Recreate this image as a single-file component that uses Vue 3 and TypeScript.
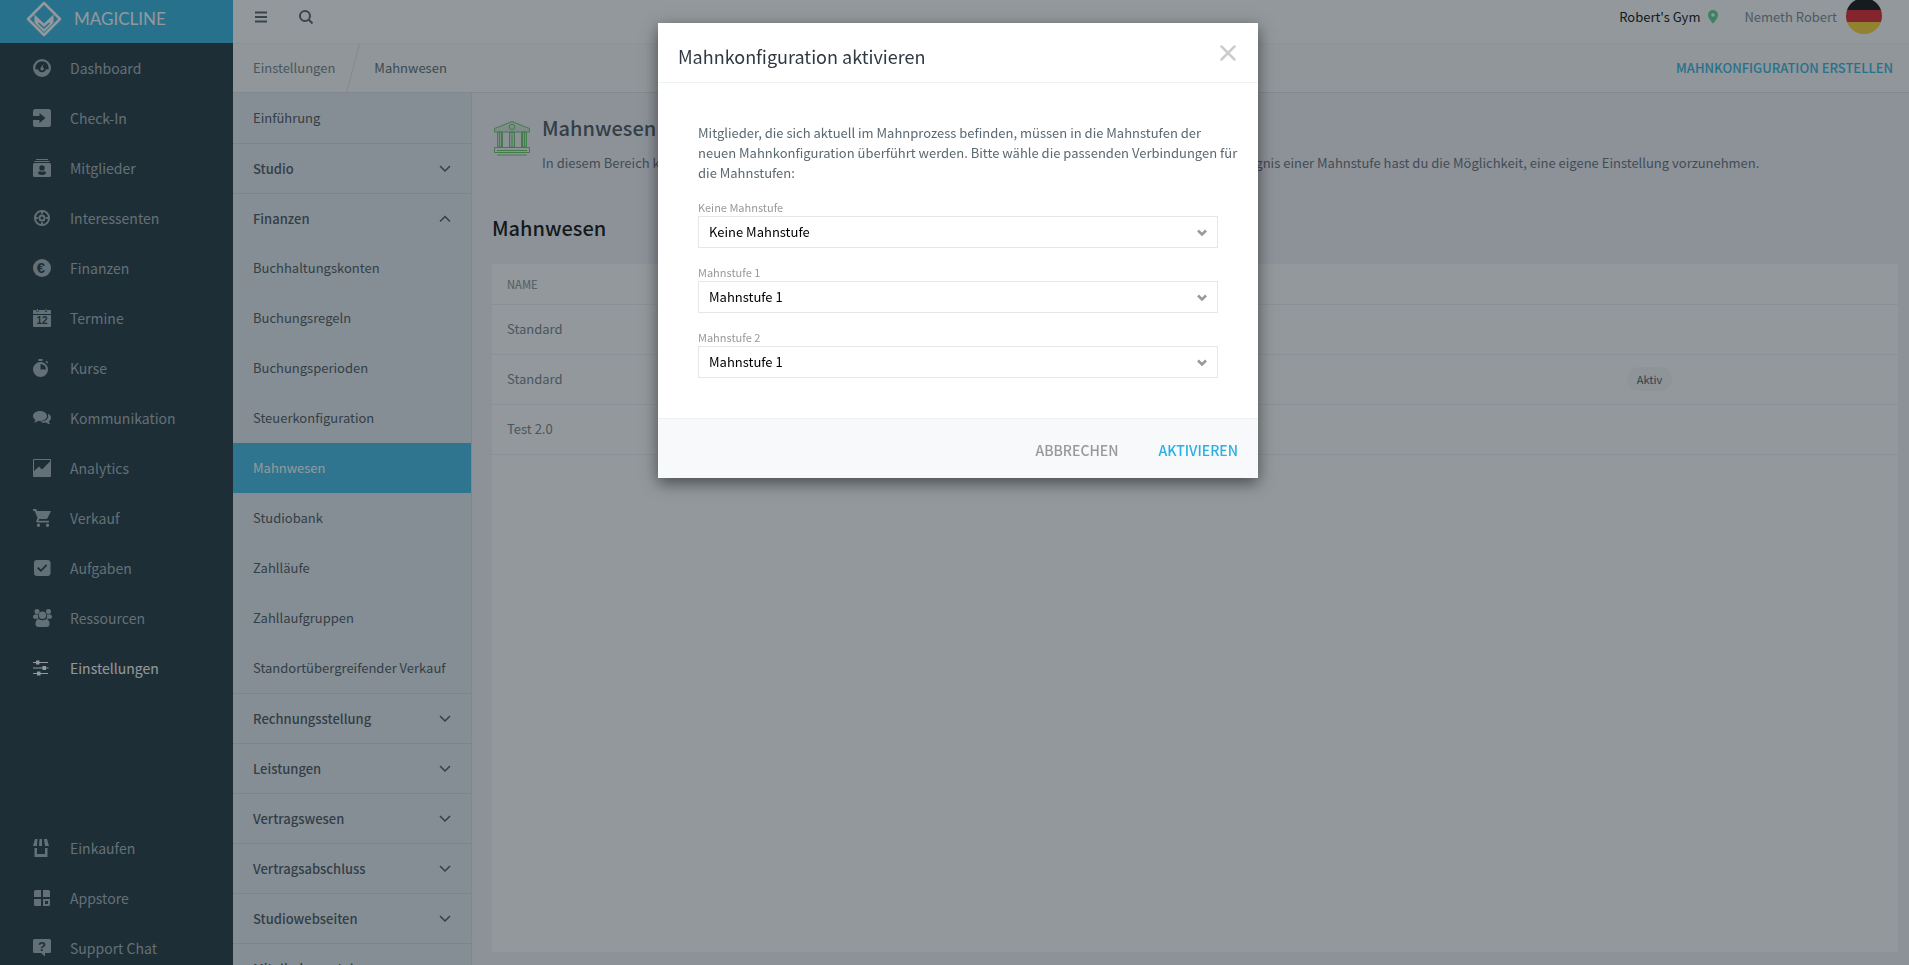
<script setup lang="ts">
import { ref } from 'vue'

interface Glyph {
  text: string
  x: number
  y: number
  size: number
}
interface NavItem {
  label: string
  path: string
  glyph?: Glyph
  active?: boolean
}
interface Group {
  label: string
  open?: boolean
  items?: string[]
}
interface Step {
  id: string
  label: string
  value: string
}

const mainNav: NavItem[] = [
  {
    label: 'Dashboard',
    path: 'M9 0a9 9 0 1 0 0 18A9 9 0 0 0 9 0zM9 2.2A6.8 6.8 0 0 1 15.8 9a6 6 0 0 1-.5 1.600L13 10.200A4.100 4.100 0 0 1 9 13.200A4.100 4.100 0 0 1 5 10.200L2.700 10.600A6 6 0 0 1 2.200 9A6.800 6.800 0 0 1 9 2.200zM10.600 4.600L9.600 8.200A1.700 1.700 0 1 1 7.600 9z',
  },
  {
    label: 'Check-In',
    path: 'M2.500 0h13A2.500 2.500 0 0 1 18 2.500v13a2.500 2.500 0 0 1-2.500 2.500h-13A2.500 2.500 0 0 1 0 15.500V11h6.500v3L12.500 9L6.500 4v3H0V2.500A2.500 2.500 0 0 1 2.500 0z',
  },
  {
    label: 'Mitglieder',
    path: 'M3 0h12v1H3zM1.500 2h15v1h-15zM1.500 4h15A1.500 1.500 0 0 1 18 5.500v11a1.500 1.500 0 0 1-1.500 1.500h-15A1.500 1.500 0 0 1 0 16.500v-11A1.500 1.500 0 0 1 1.500 4zM9 6.200a2.700 2.700 0 1 0 0 5.400a2.700 2.700 0 0 0 0-5.400zM5 14.500Q5 12 7.200 12.200Q9 13.200 10.800 12.200Q13 12 13 14.500Q11.500 16 9 16Q6.500 16 5 14.500z',
  },
  {
    label: 'Interessenten',
    path: 'M9 1a8 8 0 1 0 0 16A8 8 0 0 0 9 1zM8 3v1.800h2V3A6.200 6.200 0 0 1 15 8h-1.800v2H15a6.200 6.200 0 0 1-5 5v-1.800H8V15a6.200 6.200 0 0 1-5-5h1.800V8H3a6.200 6.200 0 0 1 5-5zM9 5.500a3.500 3.500 0 1 0 0 7a3.500 3.500 0 0 0 0-7zM9 7.400a1.600 1.600 0 1 1 0 3.200a1.600 1.600 0 0 1 0-3.200z',
  },
  {
    label: 'Finanzen',
    path: 'M9 0a9 9 0 1 0 0 18A9 9 0 0 0 9 0z',
    glyph: { text: '€', x: 8, y: 14, size: 15 },
  },
  {
    label: 'Termine',
    path: 'M1 1h2.500v2h2V1h6.500v2h2V1H17a1 1 0 0 1 1 1v3H0V2a1 1 0 0 1 1-1zM4 0h1v2.500H4zM12.500 0h1v2.500h-1zM0 6h18v11a1 1 0 0 1-1 1H1a1 1 0 0 1-1-1z',
    glyph: { text: '12', x: 9, y: 15, size: 10 },
  },
  {
    label: 'Kurse',
    path: 'M5.500 0h4v2h-4zM12.500 2.500l1.200-.8l1.500 2l-1.200.8zM7.500 3a7.500 7.500 0 1 0 0 15a7.500 7.500 0 0 0 0-15zM7.500 5A5.500 5.500 0 0 1 13 10.500H7.500z',
  },
  {
    label: 'Kommunikation',
    path: 'M7 2C3 2 0 4.200 0 7c0 1.700 1 3 2.500 4c-.2 1-.8 1.700-1.500 2.500c1.800 0 3.200-.8 4.200-1.700c.6.200 1.200.2 1.800.2c4 0 7-2.200 7-5S11 2 7 2zM15 4.800c1.900.8 3 2.200 3 3.900c0 1.500-.9 2.800-2.200 3.600c.1 1 .7 2 1.700 2.900c-1.800 0-3.200-.6-4.300-1.600c-2.300.4-4.600 0-6.200-1.200C12 12.700 15 10.300 15.200 7.200Q15.200 6 15 4.800z',
  },
  {
    label: 'Analytics',
    path: 'M1 0h16a1 1 0 0 1 1 1v16a1 1 0 0 1-1 1H1a1 1 0 0 1-1-1V1a1 1 0 0 1 1-1zM1 1v11l5-4.500l3 3L17 2.500V1z',
  },
  {
    label: 'Verkauf',
    path: 'M0 0h3.200l.9 2H18l-3.500 7.200q-.5.800-1.500.800H6.300l-.9 1.700h10.600v1.700H4.500q-2-.1-1.200-2L4.600 9L1.700 2H0zM5.500 14.500a1.700 1.700 0 1 0 0 3.400a1.700 1.700 0 0 0 0-3.400zM14.500 14.500a1.700 1.700 0 1 0 0 3.400a1.700 1.700 0 0 0 0-3.400z',
  },
  {
    label: 'Aufgaben',
    path: 'M4 1h10.500A3 3 0 0 1 17.500 4v10a3 3 0 0 1-3 3H4a3 3 0 0 1-3-3V4A3 3 0 0 1 4 1zM4 9.200l4 3.900l6.300-6.500L13 5.300L8 10.400L5.300 7.900z',
  },
  {
    label: 'Ressourcen',
    path: 'M9.500 2.500a3.700 3.700 0 1 0 0 7.400a3.700 3.700 0 0 0 0-7.400zM4 0a2.500 2.500 0 1 0 0 5a2.500 2.500 0 0 0 0-5zM15.500 0a2.500 2.500 0 1 0 0 5a2.500 2.500 0 0 0 0-5zM5.500 10q4 2.500 8 0q3 .8 3 5q0 3-3 3h-8q-3 0-3-3q0-4.200 3-5zM1.500 5.500h3.600q-.5 2.600.6 4.200H1.500Q0 9.500 0 8q0-2 1.500-2.500zM13.900 5.500h3.600Q19 6 19 8q0 1.500-1.500 1.700h-4.200q1.100-1.600.6-4.200z',
  },
  {
    label: 'Einstellungen',
    path: 'M0 3h3V1.500h3.500V3H15v1H6.500v1.500H3V4H0zM0 8.500h9.500V7H13v1.500h2.500v1H13V11H9.500V9.500H0zM0 14h4v-1.500h3.500V14H15v1H7.500v1.500H4V15H0z',
    active: true,
  },
]

const footerNav: NavItem[] = [
  {
    label: 'Einkaufen',
    path: 'M2 0h2.500L4 7H0zM6.500 0H9v7H6zM11 0h3l2 7h-4zM1.500 9h2.500v6h8V9h2.500v9h-13z',
  },
  {
    label: 'Appstore',
    path: 'M2.500 1H8v7H1V2.500A1.500 1.500 0 0 1 2.500 1zM10 1h5.500A1.500 1.500 0 0 1 17 2.500V8h-7zM1 10h7v7H2.500A1.500 1.500 0 0 1 1 15.500zM10 10h7v5.500a1.500 1.500 0 0 1-1.500 1.500H10zM12 12v3h3v-3z',
  },
  {
    label: 'Support Chat',
    path: 'M1.500 0h15A1.500 1.500 0 0 1 18 1.500v11a1.500 1.500 0 0 1-1.500 1.500H12v3.500L8 14H1.500A1.500 1.500 0 0 1 0 12.500v-11A1.500 1.500 0 0 1 1.500 0z',
    glyph: { text: '?', x: 9, y: 12, size: 13 },
  },
]

const groups: Group[] = [
  { label: 'Studio' },
  {
    label: 'Finanzen',
    open: true,
    items: [
      'Buchhaltungskonten',
      'Buchungsregeln',
      'Buchungsperioden',
      'Steuerkonfiguration',
      'Mahnwesen',
      'Studiobank',
      'Zahlläufe',
      'Zahllaufgruppen',
      'Standortübergreifender Verkauf',
    ],
  },
  { label: 'Rechnungsstellung' },
  { label: 'Leistungen' },
  { label: 'Vertragswesen' },
  { label: 'Vertragsabschluss' },
  { label: 'Studiowebseiten' },
  { label: 'Mitgliederportal' },
]

const current = ref('Mahnwesen')
const rows = [
  { name: 'Standard', active: false },
  { name: 'Standard', active: true },
  { name: 'Test 2.0', active: false },
]

const options = ['Keine Mahnstufe', 'Mahnstufe 1']
const steps = ref<Step[]>([
  { id: 'step-0', label: 'Keine Mahnstufe', value: 'Keine Mahnstufe' },
  { id: 'step-1', label: 'Mahnstufe 1', value: 'Mahnstufe 1' },
  { id: 'step-2', label: 'Mahnstufe 2', value: 'Mahnstufe 1' },
])
</script>

<template>
  <div class="app">
    <aside class="sidebar">
      <a class="brand" href="#">
        <svg class="brand-mark" viewBox="0 0 36 36" width="36" height="36">
          <path d="M18 2L34 18L18 34L2 18z" fill="none" stroke="currentColor" stroke-width="2.500" stroke-linejoin="round" />
          <path d="M8.500 13.500L18 22.500L27.500 13.500V21.500L18 31L8.500 21.500z" fill="currentColor" />
          <path d="M12.500 22L18 27L23.500 22" fill="none" stroke="#2ab0e2" stroke-width="1.500" />
        </svg>
        <span class="brand-name">MAGICLINE</span>
      </a>
      <nav class="nav">
        <a v-for="item in mainNav" :key="item.label" href="#" class="nav-item" :class="{ active: item.active }">
          <svg class="nav-icon" viewBox="0 0 19 18" width="19" height="18">
            <path :d="item.path" fill="currentColor" fill-rule="evenodd" />
            <text v-if="item.glyph" class="nav-glyph" :x="item.glyph.x" :y="item.glyph.y" :font-size="item.glyph.size" text-anchor="middle">{{ item.glyph.text }}</text>
          </svg>
          <span>{{ item.label }}</span>
        </a>
      </nav>
      <nav class="nav nav-bottom">
        <a v-for="item in footerNav" :key="item.label" href="#" class="nav-item">
          <svg class="nav-icon" viewBox="0 0 19 18" width="19" height="18">
            <path :d="item.path" fill="currentColor" fill-rule="evenodd" />
            <text v-if="item.glyph" class="nav-glyph" :x="item.glyph.x" :y="item.glyph.y" :font-size="item.glyph.size" text-anchor="middle">{{ item.glyph.text }}</text>
          </svg>
          <span>{{ item.label }}</span>
        </a>
      </nav>
    </aside>

    <div class="main">
      <header class="topbar">
        <button class="icon-btn" type="button" aria-label="Menü">
          <svg viewBox="0 0 14 14" width="14" height="14"><path d="M1 2.500h12M1 7h12M1 11.500h12" stroke="currentColor" stroke-width="2" /></svg>
        </button>
        <button class="icon-btn" type="button" aria-label="Suchen">
          <svg viewBox="0 0 14 14" width="14" height="14" fill="none" stroke="currentColor" stroke-width="2"><circle cx="6" cy="6" r="5" /><path d="M9.500 9.500L13.500 13.500" /></svg>
        </button>
        <a class="gym" href="#">
          <span>Robert's Gym</span>
          <svg viewBox="0 0 10 14" width="10" height="14"><path d="M5 0a5 5 0 0 0-5 5c0 3.500 5 8.500 5 8.500s5-5 5-8.500a5 5 0 0 0-5-5zM5 3.200a1.800 1.800 0 1 1 0 3.600a1.800 1.800 0 0 1 0-3.600z" fill="#53d38d" fill-rule="evenodd" /></svg>
        </a>
        <a class="user" href="#">Nemeth Robert</a>
        <svg class="flag" viewBox="0 2 36 34" width="36" height="34">
          <defs><clipPath id="flag-clip"><circle cx="18" cy="18" r="18" /></clipPath></defs>
          <g clip-path="url(#flag-clip)">
            <path d="M0 0h36v12H0z" fill="#050505" />
            <path d="M0 12h36v12H0z" fill="#e01820" />
            <path d="M0 24h36v12H0z" fill="#ffd028" />
          </g>
        </svg>
      </header>

      <div class="crumbs">
        <a href="#" class="crumb">Einstellungen</a>
        <svg class="slash" viewBox="0 0 14 49" width="14" height="49"><path d="M13.500 0L.5 49" stroke="#dfe2e5" fill="none" /></svg>
        <a href="#" class="crumb crumb-last">Mahnwesen</a>
        <button type="button" class="create">MAHNKONFIGURATION ERSTELLEN</button>
      </div>

      <div class="body">
        <nav class="submenu">
          <a href="#" class="sub-item">Einführung</a>
          <template v-for="group in groups" :key="group.label">
            <button type="button" class="sub-head">
              <span>{{ group.label }}</span>
              <svg viewBox="0 0 12 8" width="12" height="8" fill="none" stroke="currentColor" stroke-width="1.500">
                <path :d="group.open ? 'M1 6.500L6 1.500L11 6.500' : 'M1 1L6 6L11 1'" />
              </svg>
            </button>
            <a v-for="item in group.items ?? []" :key="item" href="#" class="sub-item" :class="{ current: item === current }" @click.prevent="current = item">{{ item }}</a>
          </template>
        </nav>

        <main class="content">
          <section class="intro">
            <svg class="bank" viewBox="0 0 38 36" width="38" height="36" fill="none" stroke="#62c462" stroke-width="1">
              <path fill="#62c462" fill-opacity=".2" d="M1.500 8.500L19 1.500L36.500 8.500V12H1.500zM4.500 12h4v15h-4zM16.500 12h5v15h-5zM29.500 12h4v15h-4z" />
              <circle cx="19" cy="7" r="2.700" />
              <path d="M9.500 12v15M28.500 12v15M6.500 12v15M19 12v15M31.500 12v15M1.500 27.500h35v5h-35zM4 30.500h30M4 35h30" />
            </svg>
            <div>
              <h1 class="title">Mahnwesen</h1>
              <p class="lead">In diesem Bereich kannst du alle deine Mahnkonfigurationen verwalten sowie neue Mahnstufen anlegen. Für jedes Ereignis einer Mahnstufe hast du die Möglichkeit, eine eigene Einstellung vorzunehmen.</p>
            </div>
          </section>
          <h2 class="heading">Mahnwesen</h2>
          <div class="panel">
            <table class="table">
              <thead>
                <tr><th scope="col">NAME</th><th scope="col"></th></tr>
              </thead>
              <tbody>
                <tr v-for="(row, i) in rows" :key="i">
                  <td>{{ row.name }}</td>
                  <td class="status"><span v-if="row.active" class="badge">Aktiv</span></td>
                </tr>
              </tbody>
            </table>
          </div>
        </main>
      </div>
    </div>

    <div class="overlay">
      <div class="dialog" role="dialog" aria-modal="true" aria-labelledby="dialog-title">
        <header class="dialog-head">
          <h3 id="dialog-title" class="dialog-title">Mahnkonfiguration aktivieren</h3>
          <button type="button" class="close" aria-label="Schließen">
            <svg viewBox="0 0 16 16" width="16" height="16"><path d="M1.500 1.500L14.500 14.500M14.500 1.500L1.500 14.500" stroke="currentColor" stroke-width="2.500" stroke-linecap="round" /></svg>
          </button>
        </header>
        <div class="dialog-body">
          <p class="dialog-text">Mitglieder, die sich aktuell im Mahnprozess befinden, müssen in die Mahnstufen der neuen Mahnkonfiguration überführt werden. Bitte wähle die passenden Verbindungen für die Mahnstufen:</p>
          <div v-for="step in steps" :key="step.id" class="field">
            <label class="field-label" :for="step.id">{{ step.label }}</label>
            <div class="select-wrap">
              <select :id="step.id" v-model="step.value" class="select">
                <option v-for="option in options" :key="option" :value="option">{{ option }}</option>
              </select>
              <svg class="caret" viewBox="0 0 10 8" width="10" height="8"><path d="M1 1.500L5 5.500L9 1.500" fill="none" stroke="#999" stroke-width="2.500" /></svg>
            </div>
          </div>
        </div>
        <footer class="dialog-foot">
          <button type="button" class="action">ABBRECHEN</button>
          <button type="button" class="action primary">AKTIVIEREN</button>
        </footer>
      </div>
    </div>
  </div>
</template>

<style>
body {
  overflow: hidden;
}
</style>

<style scoped>
.app,
.app * {
  box-sizing: border-box;
}
.app {
  display: flex;
  height: 100vh;
  overflow: hidden;
  font-family: 'Noto Sans CJK SC', 'Noto Sans', sans-serif;
  font-size: 13px;
  line-height: 20px;
  color: #424b54;
}
a {
  color: inherit;
  text-decoration: none;
}
button {
  padding: 0;
  border: 0;
  background: none;
  font: inherit;
  color: inherit;
  cursor: pointer;
}
h1,
h2,
h3,
p {
  margin: 0;
}
svg {
  display: block;
  flex: none;
}

.sidebar {
  display: flex;
  flex: none;
  flex-direction: column;
  width: 233px;
  background: #162a34;
}
.brand {
  display: flex;
  flex: none;
  align-items: center;
  gap: 12px;
  height: 43px;
  padding: 0 0 6px 26px;
  background: #2ab0e2;
  color: #fff;
}
.brand-name {
  font-family: Lato, sans-serif;
  font-size: 17px;
}
.nav-item {
  display: flex;
  align-items: center;
  gap: 18px;
  height: 50px;
  padding-left: 33px;
  font-size: 14px;
  color: #a2aeb6;
}
.nav-item.active {
  color: #fff;
}
.nav-bottom {
  height: 142px;
  margin-top: auto;
}
.nav-glyph {
  fill: #162a34;
  font-family: 'Liberation Sans', sans-serif;
  font-weight: 700;
}

.main {
  display: flex;
  flex: 1;
  flex-direction: column;
  min-width: 0;
}
.topbar {
  display: flex;
  flex: none;
  align-items: center;
  height: 43px;
  padding: 0 27px 9px 21px;
  background: #fff;
}
.icon-btn {
  margin-right: 31px;
  color: #4d5661;
}
.gym {
  display: flex;
  align-items: center;
  gap: 8px;
  margin-left: auto;
  color: #000;
}
.user {
  margin: 0 9px 0 26px;
  color: #76818b;
}
.flag {
  align-self: flex-start;
}

.crumbs {
  display: flex;
  flex: none;
  align-items: center;
  height: 50px;
  padding: 0 16px 0 20px;
  border-top: 1px solid #f3f4f5;
  border-bottom: 1px solid #dddfe4;
  background: #fafafa;
}
.crumb {
  color: #6f7a82;
}
.crumb-last {
  color: #55606a;
}
.slash {
  margin: 0 14px 0 11px;
}
.create {
  margin-left: auto;
  font-weight: 500;
  color: #2ab0e2;
}

.body {
  display: flex;
  flex: 1;
  min-height: 0;
}
.submenu {
  flex: none;
  width: 239px;
  border-right: 1px solid #dadde6;
  background: #e6eaf2;
  overflow: hidden;
}
.sub-item {
  display: flex;
  align-items: center;
  height: 50px;
  padding-left: 20px;
}
.sub-item.current {
  background: #3ab8e6;
  color: #fff;
}
.sub-head {
  display: flex;
  align-items: center;
  justify-content: space-between;
  width: 100%;
  height: 50px;
  padding: 0 20px;
  border-top: 1px solid #d3d7e0;
  font-weight: 500;
}

.content {
  display: flex;
  flex: 1;
  flex-direction: column;
  min-width: 0;
  padding: 20px 11px 13px 20px;
  background: #f5f3fb;
}
.intro {
  display: flex;
  gap: 11px;
  padding-left: 1px;
}
.bank {
  margin-top: 7px;
}
.title {
  font-size: 20px;
  font-weight: 500;
  line-height: 30px;
}
.lead {
  padding-top: 10px;
  white-space: nowrap;
  color: #5d6670;
}
.heading {
  padding: 41px 0 22px;
  font-size: 20px;
  font-weight: 500;
  line-height: 28px;
  color: #000;
}
.panel {
  flex: 1;
  background: #fff;
}
.table {
  width: 100%;
  border-collapse: collapse;
}
.table th,
.table td {
  height: 50px;
  padding: 0 15px;
  border-bottom: 1px solid #eff1f4;
  text-align: left;
  color: #6f7a82;
}
.table th {
  height: 40px;
  font-size: 11px;
  font-weight: 500;
  color: #8d969c;
}
.table .status {
  width: 20%;
  padding-left: 10px;
}
.badge {
  display: inline-block;
  padding: 2px 10px;
  border-radius: 12px;
  background: #f6f6f6;
  font-size: 11px;
  color: #424b54;
}

.overlay {
  position: fixed;
  inset: 0;
  display: flex;
  align-items: flex-start;
  justify-content: center;
  padding: 23px 0 0 7px;
  background: rgba(38, 50, 56, 0.5);
}
.dialog {
  width: 600px;
  background: #fff;
  box-shadow: 0 5px 15px rgba(0, 0, 0, 0.5);
}
.dialog-head {
  display: flex;
  justify-content: space-between;
  height: 60px;
  padding: 20px 22px 0 20px;
  border-bottom: 1px solid #eff1f3;
}
.dialog-title {
  font-size: 18px;
  font-weight: 400;
  line-height: 26px;
  color: #2f3943;
}
.close {
  align-self: flex-start;
  padding-top: 2px;
  color: #ccc;
}
.dialog-body {
  padding: 40px;
}
.dialog-text {
  margin: 0 -20px 16px 0;
  color: #5a6872;
}
.field + .field {
  margin-top: 16px;
}
.field-label {
  display: block;
  font-size: 11px;
  line-height: 17px;
  color: #999;
}
.select-wrap {
  position: relative;
}
.select {
  display: block;
  width: 100%;
  height: 32px;
  padding: 0 30px 0 10px;
  border: 1px solid #e4e6e8;
  border-radius: 0;
  background: #fff;
  appearance: none;
  font: inherit;
  color: #000;
}
.caret {
  position: absolute;
  top: 13px;
  right: 11px;
  pointer-events: none;
}
.dialog-foot {
  display: flex;
  align-items: center;
  justify-content: flex-end;
  gap: 40px;
  height: 60px;
  padding: 2px 20px 0;
  border-top: 1px solid #eff1f3;
  background: #f7f9fb;
}
.action {
  font-size: 14px;
  font-weight: 500;
  color: #999;
}
.action.primary {
  color: #2ab0e2;
}
</style>
